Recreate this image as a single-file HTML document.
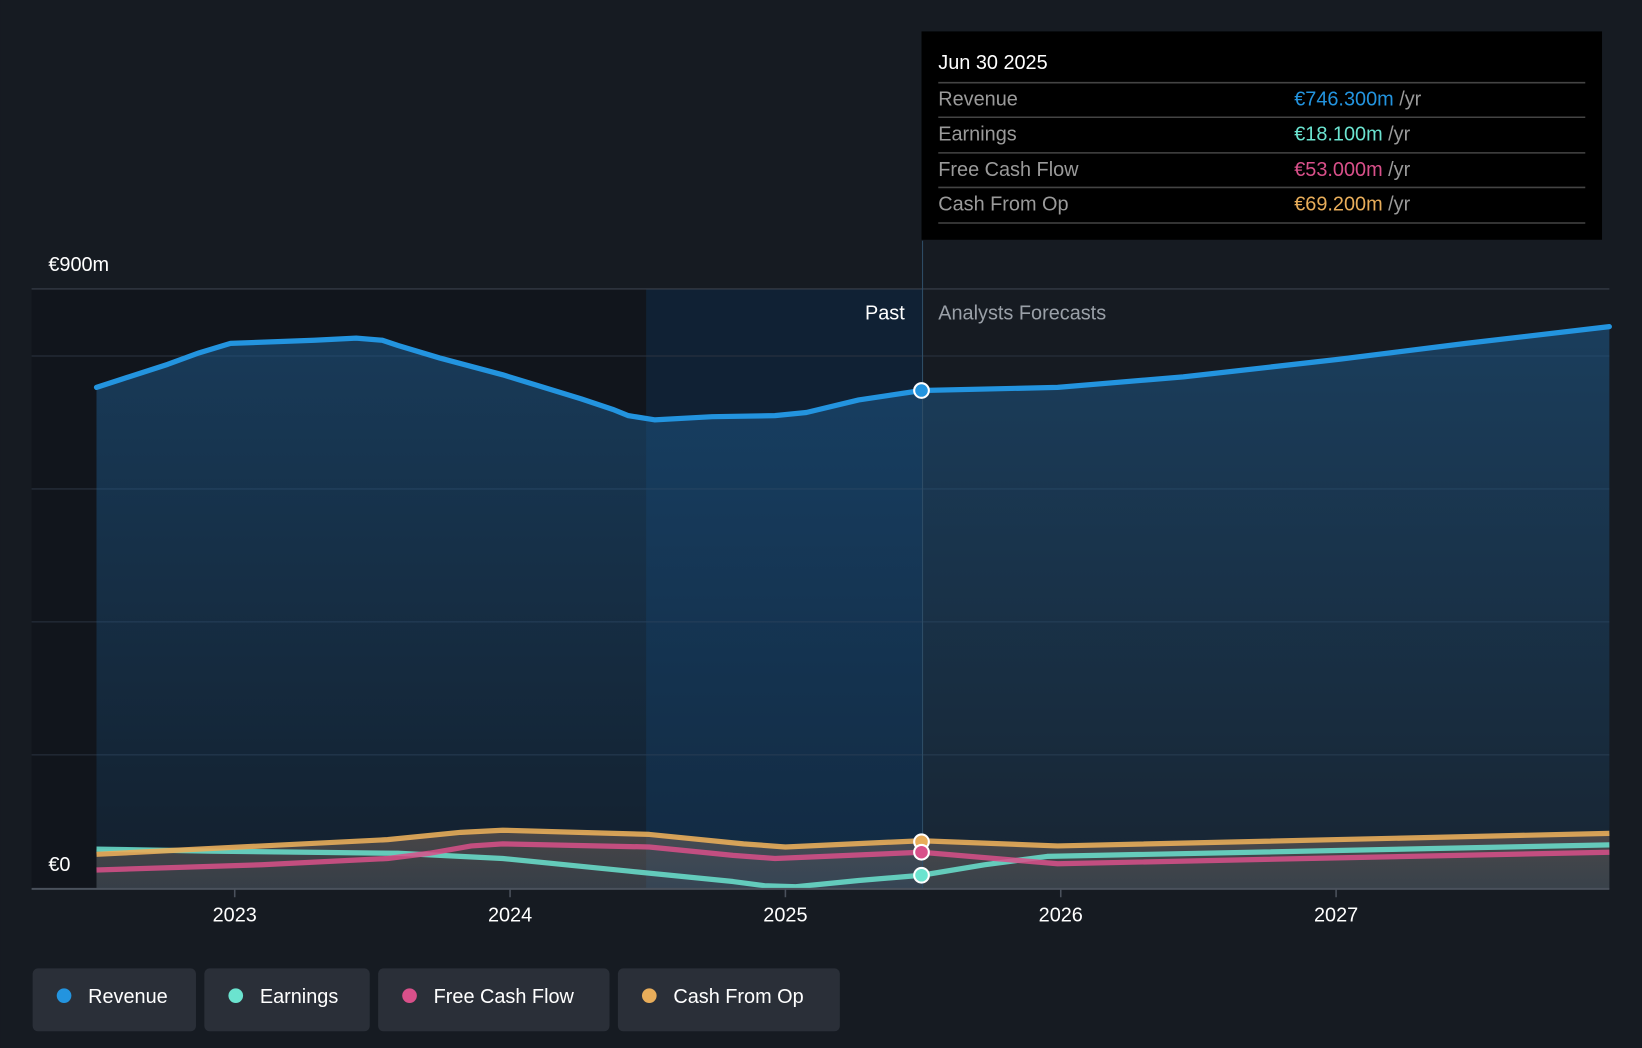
<!DOCTYPE html>
<html><head><meta charset="utf-8"><style>
html,body{margin:0;padding:0;background:#161b22;}
svg{display:block;font-family:"Liberation Sans",sans-serif;}
</style></head><body>
<svg width="1642" height="1048" viewBox="0 0 1568 1001" xmlns="http://www.w3.org/2000/svg">
<defs>
<linearGradient id="rev" x1="0" y1="0" x2="0" y2="1">
<stop offset="0" stop-color="#1e5a8c" stop-opacity="0.55"/>
<stop offset="1" stop-color="#1e5a8c" stop-opacity="0.15"/>
</linearGradient>
<linearGradient id="low" x1="0" y1="0" x2="0" y2="1">
<stop offset="0" stop-color="#8a7060" stop-opacity="0.45"/>
<stop offset="1" stop-color="#777" stop-opacity="0.35"/>
</linearGradient>
</defs>
<rect width="1568" height="1001" fill="#161b22"/>
<rect x="30" y="276" width="587" height="573" fill="#11151c"/>
<rect x="617" y="276" width="264" height="573" fill="#0f2236" opacity="0.9"/>
<g stroke="#2b3340" stroke-width="1">
<line x1="30" y1="276" x2="1537" y2="276" stroke="#3a414c"/>
<line x1="30" y1="340" x2="1537" y2="340"/>
<line x1="30" y1="467" x2="1537" y2="467"/>
<line x1="30" y1="594" x2="1537" y2="594"/>
<line x1="30" y1="721" x2="1537" y2="721"/>
</g>
<polygon fill="url(#rev)" points="92,849 92,370 160,348 190,337 220,328 300,325 340,323 365,325 380,330 420,342 480,358 555,381 585,391 600,397 625,401 680,398 740,397 770,394 820,382 880,373 1010,370 1130,360 1280,343 1400,328 1537,312 1537,849"/>
<polygon fill="url(#low)" points="92,849 92,811 250,808 370,802 480,793 620,797 750,809 880,803 1010,808 1537,796 1537,849"/>
<line x1="881" y1="230" x2="881" y2="849" stroke="#2e4d66" stroke-width="1"/>
<polyline fill="none" stroke="#2394df" stroke-width="5" stroke-linejoin="round" stroke-linecap="round" points="92,370 160,348 190,337 220,328 300,325 340,323 365,325 380,330 420,342 480,358 555,381 585,391 600,397 625,401 680,398 740,397 770,394 820,382 880,373 1010,370 1130,360 1280,343 1400,328 1537,312"/>
<polyline fill="none" stroke="#6be3cf" stroke-opacity="0.85" stroke-width="5" stroke-linejoin="round" points="92,811 200,813 380,815 480,820 600,832 700,842 730,846 760,847 820,841 880,836 940,826 1000,818 1537,807"/>
<polyline fill="none" stroke="#d9508a" stroke-opacity="0.85" stroke-width="5" stroke-linejoin="round" points="92,831 250,826 370,820 410,815 450,808 480,806 620,809 700,817 740,820 880,814 950,820 1010,825 1537,814"/>
<polyline fill="none" stroke="#e8ad5a" stroke-opacity="0.9" stroke-width="5" stroke-linejoin="round" points="92,816 250,808 370,802 440,795 480,793 620,797 710,806 750,809 880,803 1010,808 1537,796"/>
<line x1="30" y1="849" x2="1537" y2="849" stroke="#4a515c" stroke-width="2"/>
<g stroke="#4a515c" stroke-width="1.5">
<line x1="224" y1="849" x2="224" y2="857"/><line x1="487" y1="849" x2="487" y2="857"/><line x1="750" y1="849" x2="750" y2="857"/><line x1="1013" y1="849" x2="1013" y2="857"/><line x1="1276" y1="849" x2="1276" y2="857"/>
</g>
<circle cx="880" cy="373" r="7" fill="#2394df" stroke="#fff" stroke-width="2"/>
<circle cx="880" cy="804" r="7" fill="#e8ad5a" stroke="#fff" stroke-width="2"/>
<circle cx="880" cy="814" r="7" fill="#d9508a" stroke="#fff" stroke-width="2"/>
<circle cx="880" cy="836" r="7" fill="#6be3cf" stroke="#fff" stroke-width="2"/>
<g fill="#fff" font-size="19">
<text x="46" y="259">€900m</text>
<text x="46" y="832">€0</text>
<text x="864" y="305" text-anchor="end">Past</text>
<text x="896" y="305" fill="#9aa0a8">Analysts Forecasts</text>
<g text-anchor="middle"><text x="224" y="880">2023</text><text x="487" y="880">2024</text><text x="750" y="880">2025</text><text x="1013" y="880">2026</text><text x="1276" y="880">2027</text></g>
</g>
<rect x="880" y="30" width="650" height="199" fill="#000"/>
<g stroke="#444" stroke-width="1.5">
<line x1="896" y1="79" x2="1514" y2="79"/><line x1="896" y1="112" x2="1514" y2="112"/><line x1="896" y1="146" x2="1514" y2="146"/><line x1="896" y1="179" x2="1514" y2="179"/><line x1="896" y1="213" x2="1514" y2="213"/>
</g>
<g font-size="19">
<text x="896" y="66" fill="#fff">Jun 30 2025</text>
<text x="896" y="101" fill="#9a9a9a">Revenue</text>
<text x="896" y="134" fill="#9a9a9a">Earnings</text>
<text x="896" y="168" fill="#9a9a9a">Free Cash Flow</text>
<text x="896" y="201" fill="#9a9a9a">Cash From Op</text>
<text x="1236" y="101"><tspan fill="#2394df">€746.300m</tspan><tspan fill="#9a9a9a"> /yr</tspan></text>
<text x="1236" y="134"><tspan fill="#6be3cf">€18.100m</tspan><tspan fill="#9a9a9a"> /yr</tspan></text>
<text x="1236" y="168"><tspan fill="#d9508a">€53.000m</tspan><tspan fill="#9a9a9a"> /yr</tspan></text>
<text x="1236" y="201"><tspan fill="#e8ad5a">€69.200m</tspan><tspan fill="#9a9a9a"> /yr</tspan></text>
</g>
<g font-size="19" fill="#fff">
<rect x="31" y="925" width="156" height="60" rx="5" fill="#2a2f38"/>
<circle cx="61" cy="951" r="7" fill="#2394df"/><text x="84" y="958">Revenue</text>
<rect x="195" y="925" width="158" height="60" rx="5" fill="#2a2f38"/>
<circle cx="225" cy="951" r="7" fill="#6be3cf"/><text x="248" y="958">Earnings</text>
<rect x="361" y="925" width="221" height="60" rx="5" fill="#2a2f38"/>
<circle cx="391" cy="951" r="7" fill="#d9508a"/><text x="414" y="958">Free Cash Flow</text>
<rect x="590" y="925" width="212" height="60" rx="5" fill="#2a2f38"/>
<circle cx="620" cy="951" r="7" fill="#e8ad5a"/><text x="643" y="958">Cash From Op</text>
</g>
</svg>
</body></html>
